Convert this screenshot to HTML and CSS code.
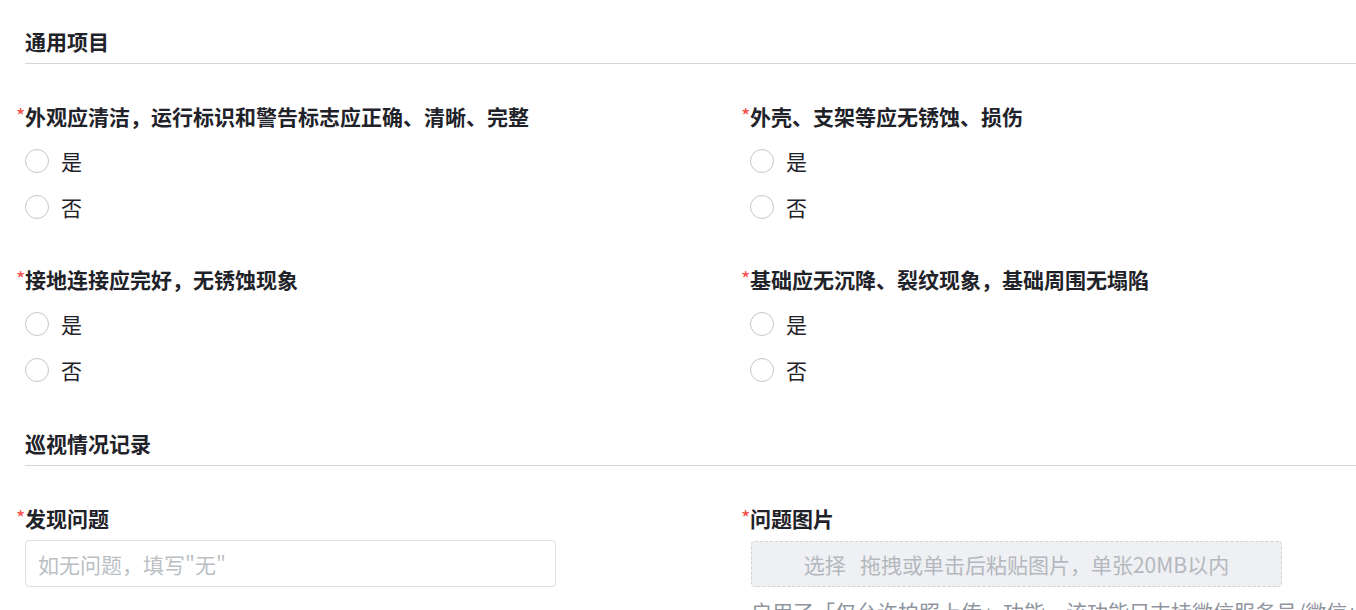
FILE: index.html
```html
<!DOCTYPE html>
<html lang="zh-CN">
<head>
<meta charset="utf-8">
<title>巡视表单</title>
<link rel="stylesheet" href="styles.css">
</head>
<body>
<div class="page">
  <div class="section-title">通用项目</div>
  <div class="grid">
    <div class="item">
      <div class="label"><span class="req">*</span>外观应清洁，运行标识和警告标志应正确、清晰、完整</div>
      <div class="radios">
        <label class="radio"><span class="circle"></span><span>是</span></label>
        <label class="radio"><span class="circle"></span><span>否</span></label>
      </div>
    </div>
    <div class="item">
      <div class="label"><span class="req">*</span>外壳、支架等应无锈蚀、损伤</div>
      <div class="radios">
        <label class="radio"><span class="circle"></span><span>是</span></label>
        <label class="radio"><span class="circle"></span><span>否</span></label>
      </div>
    </div>
    <div class="item">
      <div class="label"><span class="req">*</span>接地连接应完好，无锈蚀现象</div>
      <div class="radios">
        <label class="radio"><span class="circle"></span><span>是</span></label>
        <label class="radio"><span class="circle"></span><span>否</span></label>
      </div>
    </div>
    <div class="item">
      <div class="label"><span class="req">*</span>基础应无沉降、裂纹现象，基础周围无塌陷</div>
      <div class="radios">
        <label class="radio"><span class="circle"></span><span>是</span></label>
        <label class="radio"><span class="circle"></span><span>否</span></label>
      </div>
    </div>
  </div>
  <div class="section-title second">巡视情况记录</div>
  <div class="grid">
    <div class="item">
      <div class="label"><span class="req">*</span>发现问题</div>
      <div class="input">如无问题，填写"无"</div>
    </div>
    <div class="item">
      <div class="label"><span class="req">*</span>问题图片</div>
      <div class="upload">选择&nbsp;&nbsp;&nbsp;拖拽或单击后粘贴图片，单张20MB以内</div>
      <div class="hint">启用了「仅允许拍照上传」功能，该功能只支持微信服务号/微信小程序</div>
    </div>
  </div>
</div>
</body>
</html>
```
FILE: styles.css
```css
html, body {
  margin: 0;
  padding: 0;
  background: #ffffff;
  overflow: hidden;
}
body {
  font-family: "Noto Sans CJK SC", "Noto Sans", sans-serif;
  color: #1f2329;
}
.page {
  padding: 0 0 0 16px;
}
.section-title {
  margin: 28px 0 0 9px;
  font-size: 21px;
  font-weight: 700;
  line-height: 26px;
  padding-bottom: 9px;
  border-bottom: 1px solid #cfd6de;
}
.section-title.second {
  margin-top: 37px;
}
.grid {
  display: grid;
  grid-template-columns: 725px 1fr;
  row-gap: 36px;
  margin-top: 39px;
}
.label {
  font-size: 21px;
  font-weight: 700;
  line-height: 26px;
  white-space: nowrap;
}
.req {
  display: inline-block;
  width: 9px;
  color: #f54a45;
  font-size: 20px;
  font-weight: 400;
  vertical-align: top;
  line-height: 25px;
}
.radios {
  margin-top: 9px;
  padding-left: 9px;
  display: flex;
  flex-direction: column;
}
.radio {
  height: 46px;
  display: flex;
  align-items: center;
  font-size: 21px;
}
.circle {
  box-sizing: border-box;
  width: 24px;
  height: 24px;
  border: 1px solid #c3c6cc;
  border-radius: 50%;
  background: #fff;
  margin-right: 12px;
}
.input {
  box-sizing: border-box;
  margin: 9px 0 0 9px;
  width: 531px;
  height: 47px;
  border: 1px solid #dcdfe4;
  border-radius: 4px;
  padding: 0 12px;
  display: flex;
  align-items: center;
  font-size: 21px;
  color: #bbbfc4;
}
.upload {
  box-sizing: border-box;
  margin: 10px 0 0 10px;
  width: 531px;
  height: 46px;
  border: 1px dashed #d0d3d8;
  border-radius: 4px;
  background: #eff0f3;
  display: flex;
  align-items: center;
  justify-content: center;
  font-size: 21px;
  color: #b4b8be;
  white-space: nowrap;
}
.hint {
  margin: 9px 0 0 10px;
  font-size: 21px;
  line-height: 30px;
  color: #8f959e;
  white-space: nowrap;
}
```
